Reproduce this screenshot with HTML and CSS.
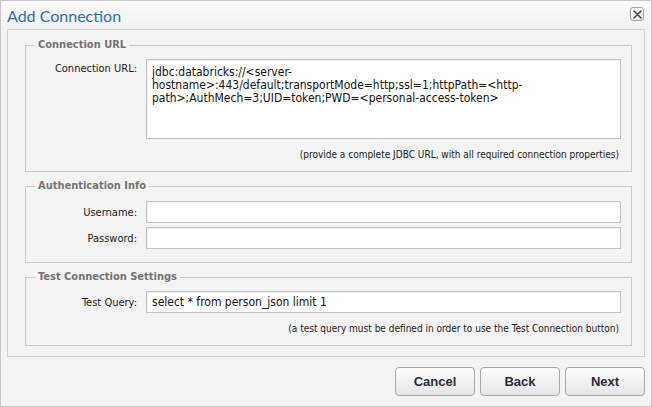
FILE: index.html
```html
<!DOCTYPE html>
<html>
<head>
<meta charset="utf-8">
<title>Add Connection</title>
<link rel="stylesheet" href="styles.css">
</head>
<body>
<div class="dialog">
  <div class="titlebar">
    <span class="title">Add Connection</span>
    <button class="close" aria-label="Close">
      <svg width="9" height="9" viewBox="0 0 9 9"><path d="M1 1 L8 8 M8 1 L1 8" stroke="#4a4a4a" stroke-width="1.6" stroke-linecap="round"/></svg>
    </button>
  </div>
  <div class="panel">
    <fieldset class="group">
      <legend>Connection URL</legend>
      <div class="row">
        <label class="lbl">Connection URL:</label>
        <textarea class="field area">jdbc:databricks://&lt;server-hostname&gt;:443/default;transportMode=http;ssl=1;httpPath=&lt;http-path&gt;;AuthMech=3;UID=token;PWD=&lt;personal-access-token&gt;</textarea>
      </div>
      <div class="hint">(provide a complete JDBC URL, with all required connection properties)</div>
    </fieldset>
    <fieldset class="group group-auth">
      <legend>Authentication Info</legend>
      <div class="row">
        <label class="lbl">Username:</label>
        <input class="field" type="text" value="">
      </div>
      <div class="row">
        <label class="lbl">Password:</label>
        <input class="field" type="password" value="">
      </div>
    </fieldset>
    <fieldset class="group">
      <legend>Test Connection Settings</legend>
      <div class="row">
        <label class="lbl">Test Query:</label>
        <input class="field" type="text" value="select * from person_json limit 1">
      </div>
      <div class="hint">(a test query must be defined in order to use the Test Connection button)</div>
    </fieldset>
  </div>
  <div class="actions">
    <button class="btn">Cancel</button>
    <button class="btn">Back</button>
    <button class="btn">Next</button>
  </div>
</div>
</body>
</html>
```
FILE: styles.css
```css
html, body {
  margin: 0;
  padding: 0;
  background: #f3f3f3;
}
.dialog {
  width: 652px;
  height: 407px;
  box-sizing: border-box;
  border: 1px solid #c8c8c8;
  background: #f3f3f3;
  font-family: "DejaVu Sans Condensed", "DejaVu Sans", sans-serif;
  display: flex;
  flex-direction: column;
}
.titlebar {
  height: 28px;
  display: flex;
  align-items: flex-start;
  justify-content: space-between;
  padding: 0 7px 0 6px;
  background: linear-gradient(#fafafa, #f1f1f1);
}
.title {
  font-family: Lato, "Open Sans", sans-serif;
  font-size: 16px;
  line-height: 18px;
  margin-top: 6px;
  color: #2f6db5;
}
.close {
  margin-top: 6px;
  width: 14px;
  height: 14px;
  padding: 0;
  border: 1px solid #a4a4a4;
  border-radius: 3px;
  background: linear-gradient(#ffffff, #ececec);
  display: flex;
  align-items: center;
  justify-content: center;
}
.close svg { display: block; }
.panel {
  margin: 0 6px;
  height: 328px;
  box-sizing: border-box;
  border: 1px solid #d0d0d0;
  padding: 8px 12px 0 17px;
  display: flex;
  flex-direction: column;
  gap: 7px;
}
.group {
  margin: 0;
  border: 1px solid #cacaca;
  padding: 7px 10px 10px 0;
  display: flex;
  flex-direction: column;
  gap: 4px;
  min-width: 0;
}
.group-auth { padding-top: 8px; padding-bottom: 13px; }
legend {
  margin-left: 9px;
  padding: 0 3px;
  font-size: 11px;
  line-height: 14px;
  font-weight: bold;
  color: #737373;
}
.row {
  display: grid;
  grid-template-columns: 111px 1fr;
  column-gap: 9px;
  align-items: center;
}
.lbl {
  text-align: right;
  font-size: 11px;
  color: #1a1a1a;
}
.row:has(.area) { align-items: start; }
.row:has(.area) .lbl { padding-top: 3px; }
.field {
  box-sizing: border-box;
  width: 475px;
  height: 22px;
  margin: 0;
  border: 1px solid #c2c2c2;
  background: #fff;
  box-shadow: inset 1px 1px 2px rgba(0, 0, 0, 0.07);
  padding: 0 5px;
  font-family: "DejaVu Sans Condensed", "DejaVu Sans", sans-serif;
  font-size: 12px;
  color: #111;
  outline: none;
}
.area {
  height: 80px;
  padding: 6px 5px;
  line-height: 12.8px;
  resize: none;
  overflow: hidden;
}
.hint {
  margin-top: 6px;
  text-align: right;
  padding-right: 2px;
  font-size: 10px;
  line-height: 12px;
  color: #222;
}
.actions {
  display: flex;
  justify-content: flex-end;
  gap: 5px;
  padding: 10px 6px 0 0;
}
.btn {
  width: 80px;
  height: 29px;
  border: 1px solid #a8a8a8;
  border-radius: 4px;
  background: linear-gradient(#fdfdfd, #e5e5e5);
  font-family: "Liberation Sans", Arial, sans-serif;
  font-weight: bold;
  font-size: 13px;
  color: #2b2b3b;
  padding: 0;
}
```
